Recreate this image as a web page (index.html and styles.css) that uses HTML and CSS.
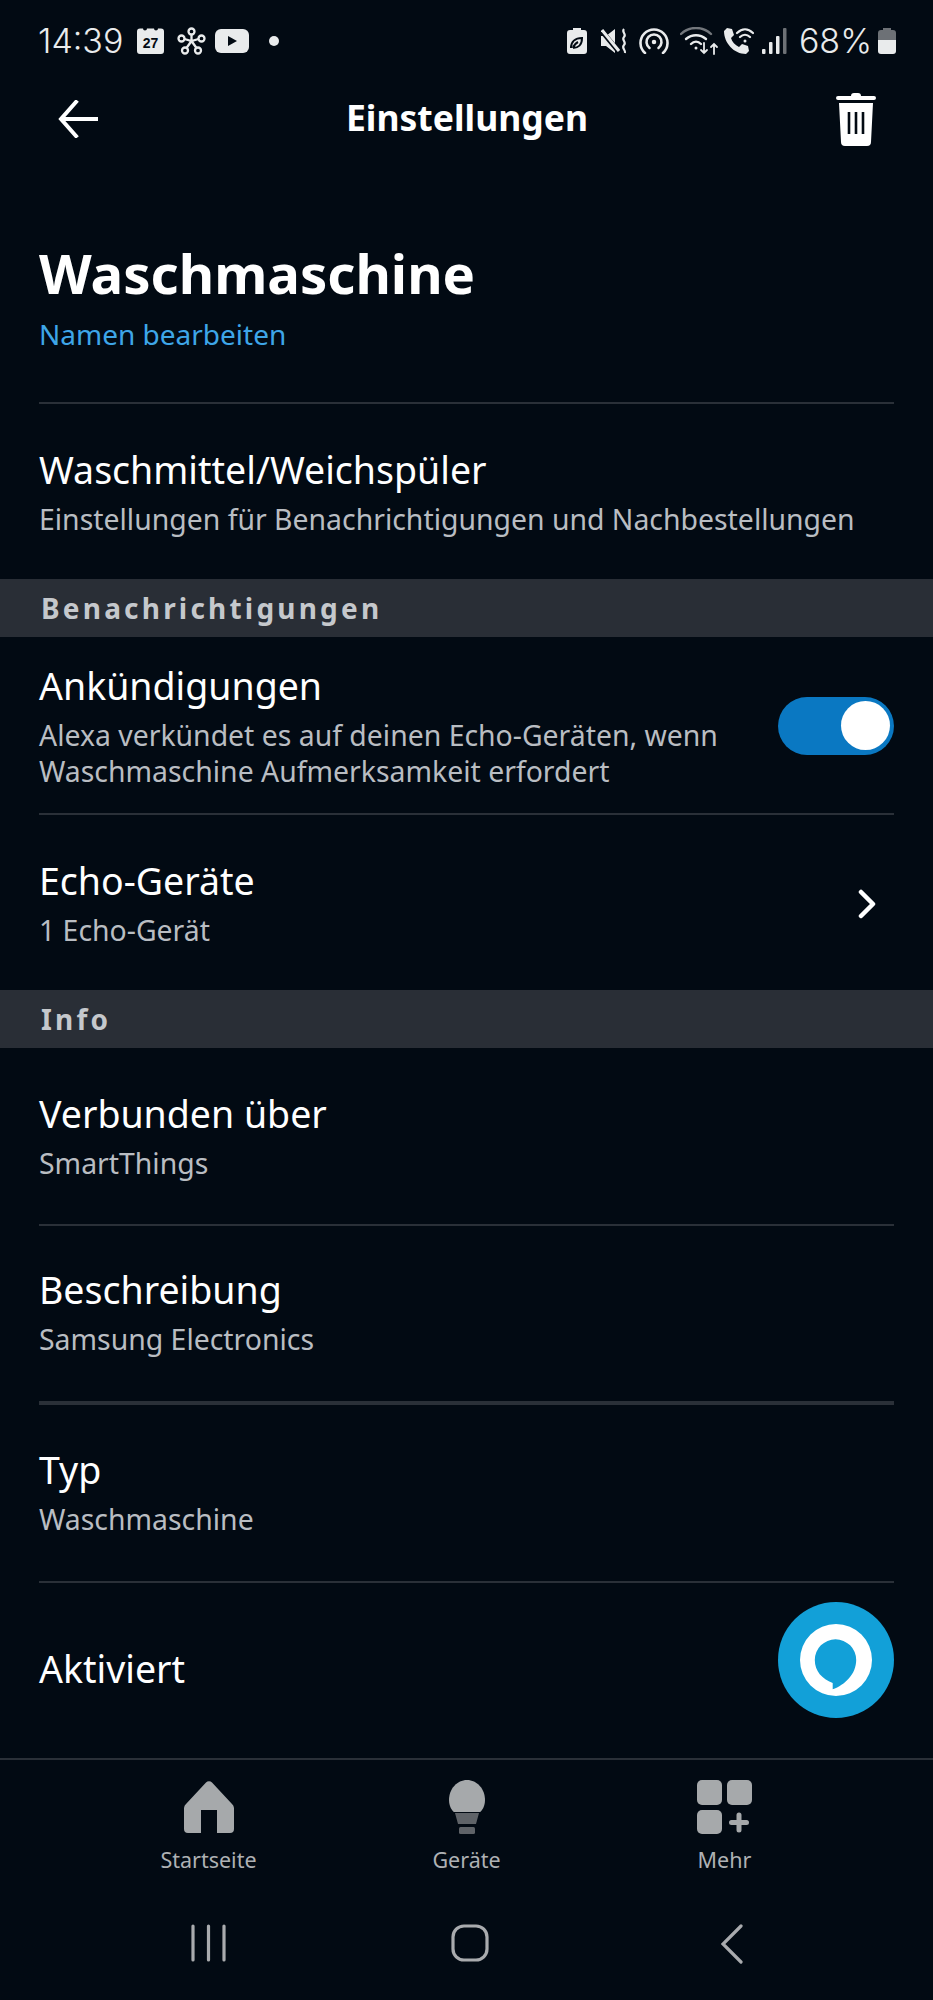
FILE: index.html
```html
<!DOCTYPE html>
<html lang="de">
<head>
    <meta charset="UTF-8">
    <meta name="viewport" content="width=device-width, initial-scale=1.0">
    <title>Einstellungen</title>
    <link rel="stylesheet" href="styles.css">
</head>
<body>
    <div class="status">
        <div class="status-left">
            <span class="time">14:39</span>
            <svg class="st-cal" width="27" height="27" viewBox="0 0 27 27"><path d="M3 1.500h3a2 2 0 0 0 4 0h7a2 2 0 0 0 4 0h3a3 3 0 0 1 3 3V24a3 3 0 0 1-3 3H3a3 3 0 0 1-3-3V4.500a3 3 0 0 1 3-3z" fill="#e9ebec"/><text x="13.500" y="21" text-anchor="middle" class="cal-num">27</text></svg>
            <svg class="st-flower" width="29" height="28" viewBox="0 0 29 28" fill="none" stroke="#e9ebec" stroke-width="2.300"><circle cx="14.500" cy="4.500" r="3"/><circle cx="4.500" cy="11.500" r="3"/><circle cx="24.500" cy="11.500" r="3"/><circle cx="8" cy="23.500" r="3"/><circle cx="21" cy="23.500" r="3"/><path d="M14.500 7.500V14M7.500 12l7 2 7-2M14.500 14l-5 7M14.500 14l5 7"/></svg>
            <svg class="st-yt" width="34" height="24" viewBox="0 0 34 24"><rect width="34" height="24" rx="6" fill="#e9ebec"/><path d="M13 7l9 5-9 5z" fill="#020a13"/></svg>
            <span class="st-dot"></span>
        </div>
        <div class="status-right">
            <svg width="20" height="26" viewBox="0 0 20 26"><path d="M6 0h8v2h3a3 3 0 0 1 3 3v18a3 3 0 0 1-3 3H3a3 3 0 0 1-3-3V5a3 3 0 0 1 3-3h3z" fill="#e9ebec"/><path d="M4 20c0-6 4-10 11-10 0 7-4 10-9 10m0 0c1-3 3-5 5-6" fill="none" stroke="#020a13" stroke-width="2"/></svg>
            <svg class="st-mute" width="27" height="26" viewBox="0 0 27 26"><path d="M0 8h5l9-7v24l-9-7H0z" fill="#e9ebec"/><path d="M0 2l18 22" stroke="#020a13" stroke-width="5"/><path d="M1 2l17 21" stroke="#e9ebec" stroke-width="3"/><path d="M23 1c-3 3 3 5 0 8s3 5 0 8 2 5 1 8" fill="none" stroke="#e9ebec" stroke-width="2.200"/></svg>
            <svg class="st-hot" width="30" height="26" viewBox="0 0 30 26" fill="none" stroke="#e9ebec" stroke-width="2.600" stroke-linecap="round"><path d="M6 25a13.500 13.500 0 1 1 18 0"/><path d="M10.500 20a7.500 7.500 0 1 1 9 0"/><circle cx="15" cy="14" r="1.500" fill="#e9ebec" stroke-width="1.500"/></svg>
            <svg class="st-wifi" width="39" height="28" viewBox="0 0 39 28" fill="none" stroke-linecap="round" stroke-width="2.400"><path d="M1 7C9-1 23-1 31 7" stroke="#73777c"/><path d="M6 12c6-5 14-5 20 0M11 17c3-3 7-3 10 0" stroke="#e9ebec"/><circle cx="16" cy="21" r="1.500" fill="#e9ebec" stroke="none"/><path d="M24 16v10m-3-3l3 3 3-3M34 27V17m-3 3l3-3 3 3" stroke="#e9ebec" stroke-width="1.800"/></svg>
            <svg class="st-call" width="30" height="26" viewBox="0 0 30 26"><path d="M3 0l5 1 2 6-3 3c1 4 4 7 8 9l3-3 6 2 1 5-3 3C10 26 0 15 0 3z" fill="#e9ebec"/><path d="M13 5c5-5 11-5 16 0M16 9c3-3 7-3 10 0" fill="none" stroke="#e9ebec" stroke-width="2.200" stroke-linecap="round"/><circle cx="21" cy="13" r="1.500" fill="#e9ebec"/></svg>
            <svg class="st-signal" width="25" height="26" viewBox="0 0 25 26"><rect x="0" y="21" width="3.500" height="5" rx="1" fill="#e9ebec"/><rect x="7" y="14" width="3.500" height="12" rx="1" fill="#e9ebec"/><rect x="14" y="8" width="3.500" height="18" rx="1" fill="#e9ebec"/><rect x="21" y="0" width="3.500" height="26" rx="1" fill="#6d7176"/></svg>
            <span class="pct">68%</span>
            <svg width="18" height="26" viewBox="0 0 18 26"><path d="M5 0h8v2h2a3 3 0 0 1 3 3v8H0V5a3 3 0 0 1 3-3h2z" fill="#6d7176"/><path d="M0 12h18v11a3 3 0 0 1-3 3H3a3 3 0 0 1-3-3z" fill="#e9ebec"/></svg>
        </div>
    </div>

    <div class="appbar">
        <svg width="40" height="38" viewBox="0 0 40 38" fill="none" stroke="#fff" stroke-width="4" stroke-linecap="square"><path d="M18 2L3 19l15 17M4 19h34"/></svg>
        <span class="appbar-title">Einstellungen</span>
        <svg width="40" height="53" viewBox="0 0 40 53"><path d="M15 3c0-2 1-3 3-3h4c2 0 3 1 3 3h13a2 2 0 0 1 0 4H2a2 2 0 0 1 0-4z" fill="#fff"/><path d="M3 10h34l-2 39a4 4 0 0 1-4 4H9a4 4 0 0 1-4-4z" fill="#fff"/><path d="M13 19v22M20 19v22M27 19v22" stroke="#020a13" stroke-width="2.600"/></svg>
    </div>

    <div class="content">
        <div class="head">
            <h1>Waschmaschine</h1>
            <a class="edit">Namen bearbeiten</a>
        </div>
        <div class="row row-first">
            <div class="row-title">Waschmittel/Weichspüler</div>
            <div class="row-sub">Einstellungen für Benachrichtigungen und Nachbestellungen</div>
        </div>

        <div class="band">Benachrichtigungen</div>
        <div class="row row-flex row-tight">
            <div>
                <div class="row-title">Ankündigungen</div>
                <div class="row-sub">Alexa verkündet es auf deinen Echo-Geräten, wenn<br>Waschmaschine Aufmerksamkeit erfordert</div>
            </div>
            <div class="toggle"><span class="knob"></span></div>
        </div>
        <div class="row row-flex row-last">
            <div>
                <div class="row-title">Echo-Geräte</div>
                <div class="row-sub">1 Echo-Gerät</div>
            </div>
            <svg class="chevron" width="18" height="30" viewBox="0 0 18 30" fill="none" stroke="#fff" stroke-width="4.500" stroke-linecap="round" stroke-linejoin="round"><path d="M3 3l12 12L3 27"/></svg>
        </div>

        <div class="band">Info</div>
        <div class="row row-info">
            <div class="row-title">Verbunden über</div>
            <div class="row-sub">SmartThings</div>
        </div>
        <div class="row row-thick">
            <div class="row-title">Beschreibung</div>
            <div class="row-sub">Samsung Electronics</div>
        </div>
        <div class="row row-type">
            <div class="row-title">Typ</div>
            <div class="row-sub">Waschmaschine</div>
        </div>
        <div class="row row-last row-single">
            <div class="row-title">Aktiviert</div>
        </div>

        <div class="alexa">
            <svg width="72" height="72" viewBox="0 0 72 72"><path fill-rule="evenodd" fill="#fff" d="M0 36a36 36 0 1 0 72 0a36 36 0 1 0-72 0zM35.500 15.300A20.700 20.700 0 0 0 14.800 36C14.800 47 22 55 32.700 59V65.300C45 61 56.200 50 56.200 36A20.700 20.700 0 0 0 35.500 15.300z"/></svg>
        </div>
    </div>

    <nav class="tabs">
        <div class="tab">
            <svg width="50" height="52" viewBox="0 0 50 52"><path d="M22 1.500a4 4 0 0 1 6 0L48 23a6 6 0 0 1 2 4v21a4 4 0 0 1-4 4H33V29H17v23H4a4 4 0 0 1-4-4V27a6 6 0 0 1 2-4z" fill="#a6a9ab"/></svg>
            <span>Startseite</span>
        </div>
        <div class="tab">
            <svg width="36" height="54" viewBox="0 0 36 54"><path d="M18 0c10 0 18 9 18 20 0 6-3 11-5 12H5C3 31 0 26 0 20 0 9 8 0 18 0z" fill="#a6a9ab"/><path d="M6 33h24l-3 11H9z" fill="#5f6368"/><rect x="10" y="47" width="16" height="7" rx="1.500" fill="#5f6368"/></svg>
            <span>Geräte</span>
        </div>
        <div class="tab">
            <svg width="55" height="54" viewBox="0 0 55 54"><rect width="25" height="25" rx="5" fill="#a6a9ab"/><rect x="30" width="25" height="25" rx="5" fill="#a6a9ab"/><rect y="30" width="25" height="24" rx="5" fill="#a6a9ab"/><path d="M42 35v15M34.500 42.500h15" stroke="#a6a9ab" stroke-width="5" stroke-linecap="round"/></svg>
            <span>Mehr</span>
        </div>
    </nav>

    <div class="sysnav">
        <svg width="35" height="38" viewBox="0 0 35 38" stroke="#a9abae" stroke-width="3.200" stroke-linecap="round"><path d="M2 2v34M17.500 2v34M33 2v34"/></svg>
        <svg class="sys-home" width="38" height="38" viewBox="0 0 38 38" fill="none" stroke="#a9abae" stroke-width="3.200"><rect x="2" y="2" width="34" height="34" rx="11"/></svg>
        <svg width="22" height="40" viewBox="0 0 22 40" fill="none" stroke="#a9abae" stroke-width="3.200" stroke-linecap="round"><path d="M20 2L2 20l18 18"/></svg>
    </div>
</body>
</html>
```

FILE: styles.css
```css
body {
    margin: 0;
    width: 933px;
    height: 2000px;
    display: flex;
    flex-direction: column;
    background-color: #020a13;
    color: white;
    font-family: "Noto Sans", Arial, sans-serif;
    overflow: hidden;
}
.status {
    height: 80px;
    box-sizing: border-box;
    padding: 27px 37px 0 38px;
    display: flex;
    justify-content: space-between;
    align-items: flex-start;
    color: #e9ebec;
}
.status-left, .status-right {
    display: flex;
    align-items: center;
    height: 27px;
}
.time, .pct {
    font-family: Inter, sans-serif;
    font-weight: 300;
    font-size: 34px;
    line-height: 27px;
}
.st-cal { margin-left: 14px; }
.st-flower { margin-left: 13px; }
.st-yt { margin-left: 9px; }
.st-dot {
    width: 10px;
    height: 10px;
    border-radius: 50%;
    background-color: #e9ebec;
    margin-left: 20px;
}
.cal-num {
    font-family: "Liberation Sans", sans-serif;
    font-weight: bold;
    font-size: 14px;
    fill: #020a13;
}
.st-mute { margin-left: 14px; }
.st-hot { margin-left: 11px; }
.st-wifi { margin-left: 11px; }
.st-call { margin-left: 5px; }
.st-signal { margin-left: 8px; }
.pct { margin: 0 6px 0 12px; }

.appbar {
    height: 78px;
    box-sizing: border-box;
    padding: 0 57px 0 58px;
    display: flex;
    justify-content: space-between;
    align-items: center;
}
.appbar-title {
    font-size: 35.500px;
    font-weight: 700;
    margin-bottom: 4px;
}
.content {
    position: relative;
    flex: 1;
}
.head {
    margin: 0 39px;
    padding-top: 79px;
    height: 246px;
    box-sizing: border-box;
    border-bottom: 2px solid #2a3038;
}
h1 {
    margin: 0;
    font-size: 54.500px;
    line-height: 72px;
    font-weight: 700;
}
.edit {
    display: block;
    margin-top: 7px;
    font-size: 28px;
    line-height: 36px;
    color: #3ea6e8;
}
.row {
    margin: 0 39px;
    padding: 42px 0 44px;
    border-bottom: 2px solid #2a3038;
}
.row-first {
    padding: 42px 0 42px;
    border-bottom: none;
}
.row-flex {
    display: flex;
    justify-content: space-between;
    align-items: center;
}
.row-tight { padding: 25px 0 24px; }
.row-info { padding-bottom: 43px; }
.row-thick { padding-top: 40px; border-bottom-width: 4px; }
.row-type { padding-top: 41px; }
.row-last { padding-bottom: 42px; border-bottom: none; }
.row-single { padding-top: 62px; }
.row-title {
    font-size: 37.500px;
    line-height: 48px;
}
.row-sub {
    margin-top: 7px;
    font-size: 28.400px;
    line-height: 36px;
    color: #b9bdc2;
}
.band {
    height: 58px;
    padding-left: 41px;
    background-color: #292e36;
    color: #c5c8cc;
    font-size: 28px;
    line-height: 58px;
    font-weight: 700;
    letter-spacing: 3.200px;
}
.toggle {
    width: 116px;
    height: 58px;
    border-radius: 29px;
    background-color: #0a78c2;
    display: flex;
    justify-content: flex-end;
    align-items: center;
    padding-right: 4px;
    box-sizing: border-box;
}
.knob {
    width: 49px;
    height: 49px;
    border-radius: 50%;
    background-color: white;
}
.chevron { margin-right: 18px; margin-top: 2px; }
.alexa {
    position: absolute;
    left: 778px;
    top: 1444px;
    width: 116px;
    height: 116px;
    border-radius: 50%;
    background-color: #12a0d8;
    display: flex;
    justify-content: center;
    align-items: center;
}
.tabs {
    height: 156px;
    box-sizing: border-box;
    border-top: 2px solid #2a3038;
    padding-top: 20px;
    display: flex;
    justify-content: center;
}
.tab {
    width: 258px;
    display: flex;
    flex-direction: column;
    align-items: center;
    color: #aeb1b4;
    font-size: 21.500px;
}
.tab svg { height: 54px; }
.tab span { margin-top: 12px; line-height: 28px; }
.sysnav {
    height: 86px;
    box-sizing: border-box;
    padding: 10px 190px 0 191px;
    display: flex;
    justify-content: space-between;
    align-items: flex-start;
}
.sys-home { margin-right: 7px; }
```
